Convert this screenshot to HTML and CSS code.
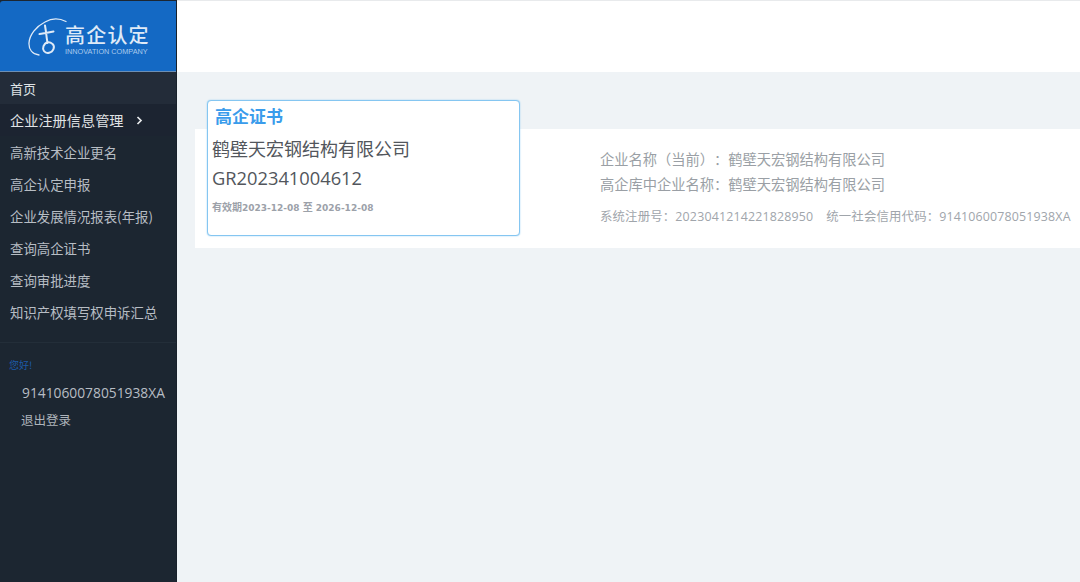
FILE: index.html
```
<!DOCTYPE html>
<html lang="zh">
<head>
<meta charset="utf-8">
<title>高企认定</title>
<link rel="stylesheet" href="styles.css">
</head>
<body>
<div class="app">
  <aside class="sidebar">
    <div class="logo">
      <svg class="logo-mark" width="42" height="42" viewBox="0 0 42 42" fill="none" stroke="#dfeaf7" stroke-linecap="round">
        <path d="M40 4.500C34 1.500 26 1 19 5C10 9.500 3.500 18 3 26C2.700 32 6 37 13 38" stroke-width="1.300"/>
        <path d="M19 8.500L20 15M13.500 17C18 16.200 23 15.500 27.500 14.500M20 15C20.500 19.500 21 23 21.500 26M21.500 25C17.500 27 16 31 18 34C20.500 37.500 26 36 27.500 32C29 28.500 26 25 21.500 25" stroke-width="2"/>
      </svg>
      <div class="logo-text">
        <div class="logo-title">高企认定</div>
        <div class="logo-sub">INNOVATION COMPANY</div>
      </div>
    </div>
    <nav class="menu">
      <a class="item home">首页</a>
      <a class="item active">企业注册信息管理
        <svg class="chev" width="7" height="9" viewBox="0 0 7 9" fill="none" stroke="#e8eaec" stroke-width="1.700"><path d="M1.500 1l3.500 3.500-3.500 3.500"/></svg>
      </a>
      <a class="item">高新技术企业更名</a>
      <a class="item">高企认定申报</a>
      <a class="item">企业发展情况报表(年报)</a>
      <a class="item">查询高企证书</a>
      <a class="item">查询审批进度</a>
      <a class="item">知识产权填写权申诉汇总</a>
    </nav>
    <div class="user">
      <div class="hello">您好!</div>
      <div class="uid">9141060078051938XA</div>
      <div class="logout">退出登录</div>
    </div>
  </aside>
  <div class="main">
    <header class="topbar"></header>
    <section class="content">
      <div class="panel">
        <div class="info">
          <p class="line">企业名称（当前）：鹤壁天宏钢结构有限公司</p>
          <p class="line">高企库中企业名称：鹤壁天宏钢结构有限公司</p>
          <p class="meta"><span>系统注册号：2023041214221828950</span><span>统一社会信用代码：9141060078051938XA</span></p>
        </div>
      </div>
      <div class="cert">
        <div class="cert-title">高企证书</div>
        <div class="cert-name">鹤壁天宏钢结构有限公司</div>
        <div class="cert-no">GR202341004612</div>
        <div class="cert-date"><span class="cn">有效期</span>2023-12-08 <span class="cn">至</span> 2026-12-08</div>
      </div>
    </section>
  </div>
</div>
</body>
</html>
```
FILE: styles.css
```
* { box-sizing: border-box; }
html, body { margin: 0; height: 100%; overflow: hidden; }
body { font-family: "Noto Sans CJK SC", "Open Sans", sans-serif; background: #eff3f6; text-spacing-trim: space-all; }
.app { display: flex; height: 582px; width: 1080px; }
.sidebar { width: 177px; flex: none; background: #1c2631; border-right: 1px solid #18212b; color: #d8dde2; }
.logo { height: 71px; background: #1469c4; border-bottom: 1px solid #6d8fb4; display: flex; align-items: center; padding: 0 0 0 26px; margin-top: 1px; border-radius: 3px 0 0 0; }
.logo-mark { flex: none; margin-top: 3px; }
.logo-text { margin-left: -3px; padding-top: 6px; }
.logo-title { font-size: 20px; line-height: 25px; font-weight: 500; letter-spacing: 1.200px; color: #dfeaf7; white-space: nowrap; }
.logo-sub { font-family: "Liberation Sans", sans-serif; font-size: 7.300px; line-height: 10px; color: #a9c9ec; white-space: nowrap; }
.menu { display: flex; flex-direction: column; padding-bottom: 14px; border-bottom: 1px solid #232e39; }
.item { height: 32px; display: flex; align-items: center; padding-left: 10px; font-size: 13.400px; color: #b7bdc4; white-space: nowrap; }
.home { background: #232c39; color: #dfe3e6; font-size: 13px; }
.active { background: #1c2431; color: #e0e3e6; font-size: 14.200px; }
.chev { margin-left: 12px; margin-top: 1px; }
.user { padding-top: 14px; }
.hello { padding-left: 9px; font-size: 10px; line-height: 15px; color: #1d5aa8; }
.uid { padding: 12px 0 0 22px; font-family: "Open Sans", sans-serif; font-size: 13.800px; line-height: 18px; color: #b7bdc4; white-space: nowrap; }
.logout { padding: 9px 0 0 21px; font-size: 12.500px; line-height: 18px; color: #aeb4bb; }
.main { flex: 1; min-width: 0; display: flex; flex-direction: column; }
.topbar { height: 72px; flex: none; background: #fff; border-top: 1px solid #e8eaec; }
.content { position: relative; flex: 1; padding: 57px 0 0 18px; }
.panel { height: 119px; background: #fff; display: flex; padding-left: 405px; }
.info { padding-top: 18px; color: #9a9fa5; white-space: nowrap; }
.line { margin: 0; font-size: 14.250px; line-height: 24.500px; }
.meta { margin: 12px 0 0; font-family: "Open Sans", "Noto Sans CJK SC", sans-serif; font-size: 12.400px; line-height: 18px; letter-spacing: 0.170px; display: flex; gap: 13px; color: #a0a5ab; }
.cert { position: absolute; left: 30px; top: 28px; width: 313px; height: 136px; background: #fff; border: 1px solid #85c6f1; border-radius: 4px; padding: 2px 0 0 7px; box-shadow: 0 0 1.500px #85c6f1; }
.cert-title { font-size: 17px; line-height: 25px; font-weight: 700; color: #3a9ceb; }
.cert-name { margin: 7px 0 0 -3px; font-size: 18px; line-height: 26px; color: #52565c; white-space: nowrap; }
.cert-no { margin: 4px 0 0 -3px; font-family: "Open Sans", sans-serif; font-size: 18.300px; line-height: 26px; color: #52565c; }
.cert-date { margin: 9px 0 0 -3px; font-family: "DejaVu Sans", sans-serif; font-size: 9px; line-height: 14px; font-weight: 700; color: #9ca1a9; white-space: nowrap; }
.cn { font-family: "Noto Sans CJK SC", sans-serif; font-size: 10px; }
```
